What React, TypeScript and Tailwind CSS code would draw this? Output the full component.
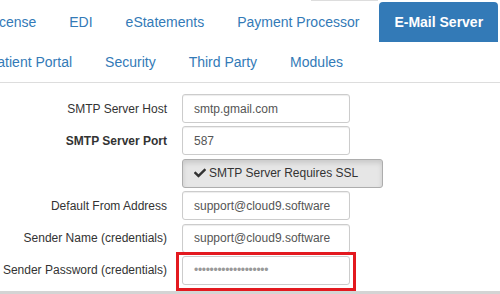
import { FaCheck } from "react-icons/fa";

const topTabs = ["License", "EDI", "eStatements", "Payment Processor"];
const bottomTabs = ["Patient Portal", "Security", "Third Party", "Modules"];

const fields = [
  { label: "SMTP Server Host", value: "smtp.gmail.com" },
  { label: "SMTP Server Port", value: "587", bold: true },
];

const senderFields = [
  { label: "Default From Address", value: "support@cloud9.software" },
  { label: "Sender Name (credentials)", value: "support@cloud9.software" },
];

function Row({ label, bold, children }: { label?: string; bold?: boolean; children: React.ReactNode }) {
  return (
    <div className="flex h-[29px] items-center">
      <div className={`w-[167px] shrink-0 text-right text-xs text-[#333] ${bold ? "font-bold" : ""}`}>{label}</div>
      <div className="relative ml-[15px] flex h-full items-center">{children}</div>
    </div>
  );
}

function Field({ value }: { value: string }) {
  return (
    <div className="flex h-[29px] w-[168px] items-center rounded-[3px] border border-[#ccc] bg-white px-[11px] text-xs text-[#555] shadow-[inset_0_1px_1px_rgba(0,0,0,0.075)]">
      {value}
    </div>
  );
}

export default function App() {
  return (
    <main className="h-[294px] w-[500px] overflow-hidden bg-white font-['Liberation_Sans',Arial,sans-serif]">
      <div className="h-[2px]">
        <div className="ml-[311px] h-px w-[67px] bg-[#ddd]" />
      </div>

      <nav className="border-b border-[#ddd] text-sm leading-5">
        <ul className="ml-[-27px] flex whitespace-nowrap">
          {topTabs.map((tab, i) => (
            <li
              key={tab}
              className={`px-[15px] py-[10px] text-[#337ab7] ${i === topTabs.length - 1 ? "mr-[5px]" : "mr-[3px]"}`}
            >
              {tab}
            </li>
          ))}
          <li className="rounded-t-[4px] bg-[#337ab7] px-[15px] py-[10px] font-bold text-white">E-Mail Server</li>
        </ul>
        <ul className="ml-[-27px] flex whitespace-nowrap">
          {bottomTabs.map((tab) => (
            <li key={tab} className="mr-[3px] px-[15px] py-[10px] text-[#337ab7]">
              {tab}
            </li>
          ))}
        </ul>
      </nav>

      <form className="mt-[11px] flex flex-col gap-[3.4px]">
        {fields.map((f) => (
          <Row key={f.label} label={f.label} bold={f.bold}>
            <Field value={f.value} />
          </Row>
        ))}
        <Row>
          <div className="flex h-[29px] w-[201px] items-center gap-[3px] rounded-[3px] border border-[#adadad] bg-[#e6e6e6] px-[11px] text-xs text-[#333] shadow-[inset_0_3px_5px_rgba(0,0,0,0.125)]">
            <FaCheck className="text-[12px]" />
            SMTP Server Requires SSL
          </div>
        </Row>
        {senderFields.map((f) => (
          <Row key={f.label} label={f.label}>
            <Field value={f.value} />
          </Row>
        ))}
        <Row label="Sender Password (credentials)">
          <div className="flex h-[29px] w-[168px] items-center rounded-[3px] border border-[#ccc] bg-white px-[11px] text-xs tracking-[-0.3px] text-[#999]">
            •••••••••••••••••••
          </div>
          <div className="absolute left-[-6px] top-[-4px] h-[39px] w-[180px] border-[3px] border-[#e3191f]" />
        </Row>
      </form>

      <div className="mt-[6px] h-[10px] bg-[#d4d4d4]" />
    </main>
  );
}
